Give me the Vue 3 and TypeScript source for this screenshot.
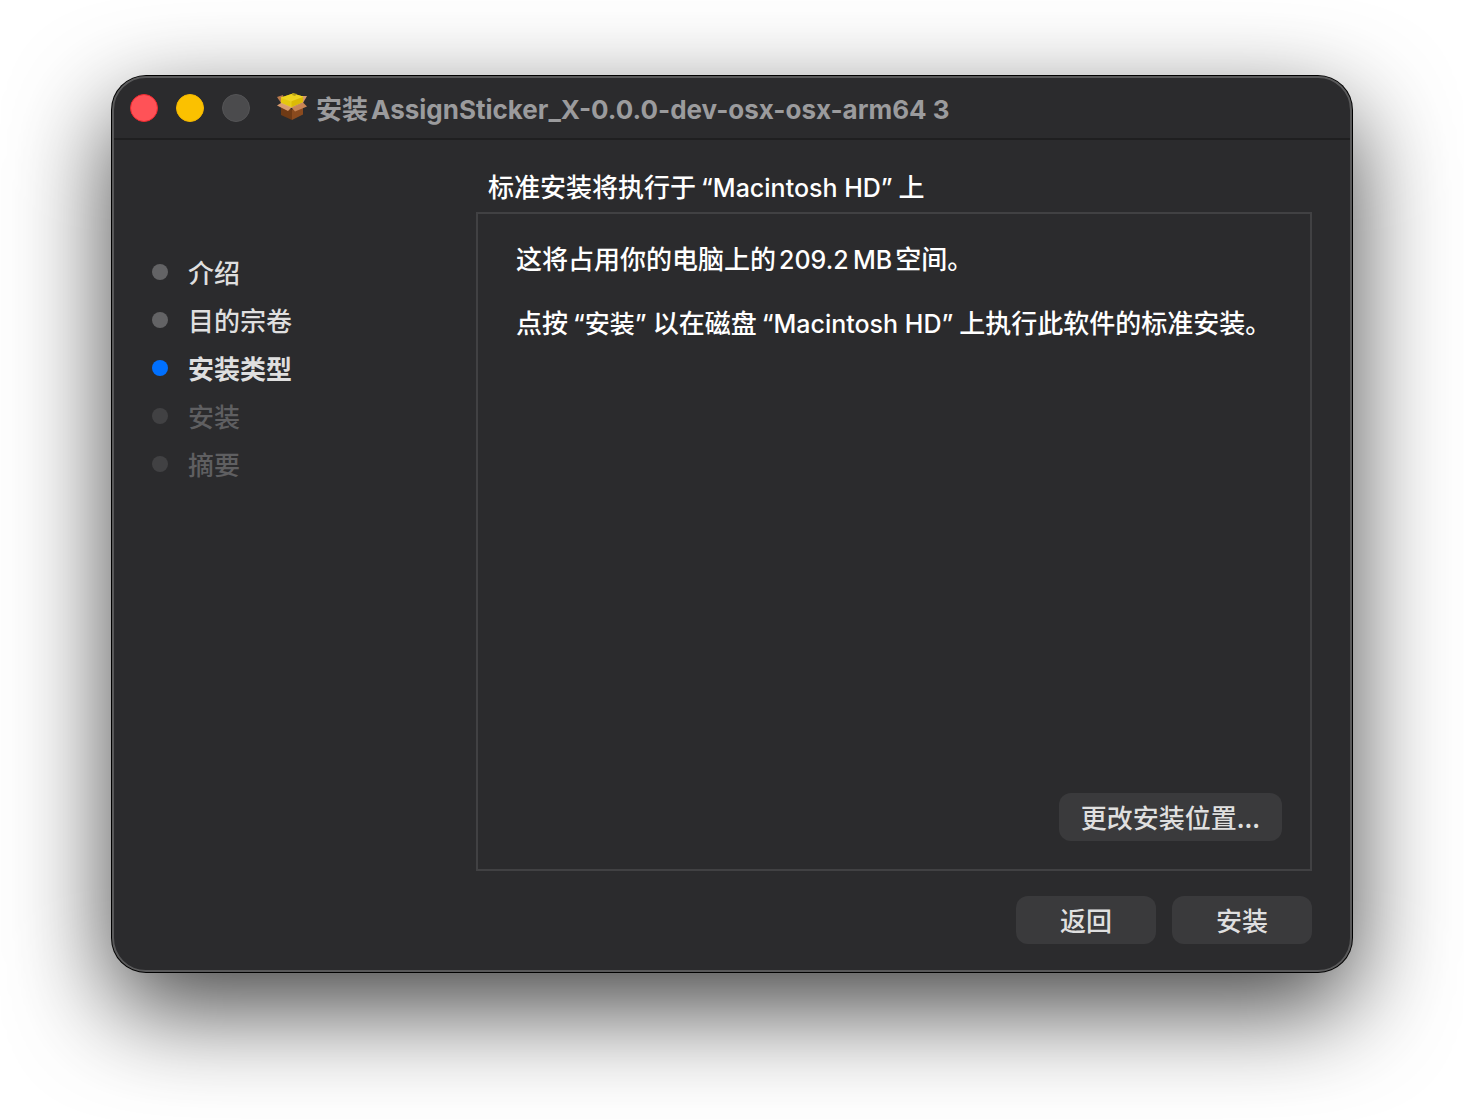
<script setup lang="ts">
type StepState = 'done' | 'current' | 'pending'

interface Step {
  label: string
  state: StepState
}

const steps: Step[] = [
  { label: '介绍', state: 'done' },
  { label: '目的宗卷', state: 'done' },
  { label: '安装类型', state: 'current' },
  { label: '安装', state: 'pending' },
  { label: '摘要', state: 'pending' },
]
</script>

<template>
  <div class="desktop">
    <section class="window" aria-labelledby="window-title">
      <header class="titlebar">
        <div class="lights">
          <button type="button" class="light close" aria-label="关闭"></button>
          <button type="button" class="light minimize" aria-label="最小化"></button>
          <button type="button" class="light zoom" aria-label="缩放" disabled></button>
        </div>
        <svg class="package" viewBox="0 0 32 32" aria-hidden="true">
          <path d="M5 13 16 17.500 16 28 5 23Z" fill="#6f3a15" />
          <path d="M16 17.500 27 13 27 22.500 16 28Z" fill="#8a4a1e" />
          <path d="M1 5 7 3 8 8 5 11Z" fill="#b9794c" />
          <path d="M25 4 31 4 27 11 24 10Z" fill="#d49a6c" />
          <path d="M5 5.500 17 1.500 27 4.500 27 10.500 15 16 5 12Z" fill="#dcbb06" />
          <path d="M5 5.500 17 1.500 27 4.500 15 9Z" fill="#efd41f" />
          <path d="M5 5.500 15 9 15 16 5 12Z" fill="#e6c80e" />
          <path d="M17 1 21 2 19 4 16 3Z" fill="#b5a018" />
          <path d="M5 5.500 15 9 27 4.500M15 9V16" fill="none" stroke="#f2dd3c" stroke-width="0.500" />
          <path d="M5 11 15.500 15.500 12 19 1 13.500Z" fill="#d99b6e" />
          <path d="M15.500 15.500 27 10.500 31 14.500 19 19.500Z" fill="#c98556" />
          <path d="M5 11 15.500 15.500 27 10.500" fill="none" stroke="#e0aa7c" stroke-width="0.500" />
        </svg>
        <h1 id="window-title">安装<span class="latin">AssignSticker_X-0.0.0-dev-osx-osx-arm64 3</span></h1>
      </header>

      <div class="content">
        <nav class="sidebar" aria-label="安装步骤">
          <ol>
            <li
              v-for="step in steps"
              :key="step.label"
              :class="step.state"
              :aria-current="step.state === 'current' ? 'step' : undefined"
            >
              {{ step.label }}
            </li>
          </ol>
        </nav>

        <main>
          <h2>标准安装将执行于<span class="latin quoted">“Macintosh HD”</span>上</h2>
          <div class="panel">
            <div class="message">
              <p>这将占用你的电脑上的<span class="latin">209.2&#8201;MB</span>空间。</p>
              <p>点按<span class="latin quoted">“安装”</span>以在磁盘<span class="latin quoted">“Macintosh HD”</span>上执行此软件的标准安装。</p>
            </div>
            <button type="button" class="push location">更改安装位置...</button>
          </div>
          <footer>
            <button type="button" class="push">返回</button>
            <button type="button" class="push">安装</button>
          </footer>
        </main>
      </div>
    </section>
  </div>
</template>

<style>
body {
  margin: 0;
  background: #fff;
}
</style>

<style scoped>
* {
  box-sizing: border-box;
}

.desktop {
  display: flex;
  min-height: 100vh;
  padding: 76px 112px 148px;
  overflow: hidden;
  font: 500 26px/32px 'Noto Sans CJK SC', sans-serif;
}

.window {
  display: flex;
  flex: 1;
  flex-direction: column;
  min-width: 0;
  border: 2px solid #59595a;
  border-radius: 34px;
  background: #2b2b2d;
  color: #fff;
  box-shadow: 0 0 0 1px #000, 0 36px 100px rgba(0, 0, 0, 0.74);
}

.titlebar {
  display: flex;
  align-items: center;
  height: 62px;
  padding: 0 16px;
  border-bottom: 2px solid #1f1f20;
}

.lights {
  display: flex;
  gap: 18px;
  margin-right: 26px;
}

.light {
  width: 28px;
  height: 28px;
  padding: 0;
  border: 1px solid;
  border-radius: 50%;
}

.close {
  border-color: #f0282e;
  background: #ff5257;
}

.minimize {
  border-color: #f5b800;
  background: #fbc100;
}

.zoom {
  border-color: #545456;
  background: #4b4b4d;
}

.package {
  width: 32px;
  height: 32px;
  margin-right: 8px;
}

h1,
h2,
p,
ol {
  margin: 0;
  padding: 0;
  font-size: inherit;
  font-weight: inherit;
}

h1 {
  color: #9b9b9d;
  font-weight: 700;
  white-space: nowrap;
}

.latin {
  margin: 0 3px;
  font-family: Inter, 'Noto Sans CJK SC', sans-serif;
  line-height: 26px;
}

h2 .latin,
p .latin {
  font-size: 25px;
}

.latin.quoted {
  margin: 0 6px 0 5px;
}

.content {
  display: flex;
  flex: 1;
}

.sidebar {
  flex: 0 0 362px;
  padding: 108px 38px;
}

li {
  display: flex;
  align-items: center;
  gap: 20px;
  height: 48px;
  color: #dfdfdf;
}

li::before {
  width: 16px;
  height: 16px;
  border-radius: 50%;
  background: #636365;
  content: '';
}

.current {
  font-weight: 700;
}

.current::before {
  background: #0070ff;
}

.pending {
  color: #5f5f61;
}

.pending::before {
  background: #414143;
}

main {
  display: flex;
  flex: 1;
  flex-direction: column;
  min-width: 0;
  padding: 30px 38px 26px 0;
}

h2 {
  padding: 0 12px 10px;
}

.panel {
  display: flex;
  flex: 1;
  flex-direction: column;
  justify-content: space-between;
  padding: 28px;
  border: 2px solid #414143;
}

.message {
  display: grid;
  gap: 32px;
  padding-left: 10px;
}

.push {
  min-width: 140px;
  height: 48px;
  padding: 0 22px;
  border: 0;
  border-radius: 12px;
  background: #3a3a3c;
  color: #dfdfdf;
  font: inherit;
}

.location {
  align-self: flex-end;
}

footer {
  display: flex;
  justify-content: flex-end;
  gap: 16px;
  padding-top: 25px;
}
</style>
